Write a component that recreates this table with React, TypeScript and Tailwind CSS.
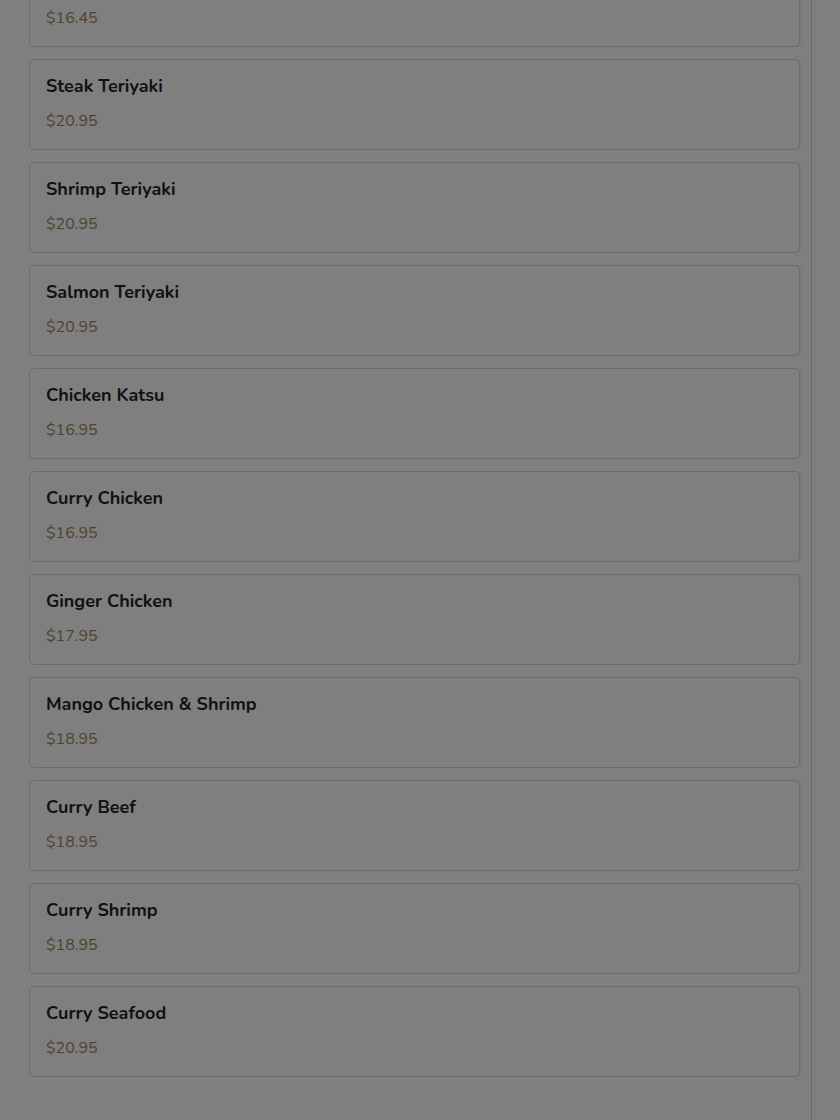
import React from "react";

const items = [
  { name: "Chicken Teriyaki", price: "$16.45" },
  { name: "Steak Teriyaki", price: "$20.95" },
  { name: "Shrimp Teriyaki", price: "$20.95" },
  { name: "Salmon Teriyaki", price: "$20.95" },
  { name: "Chicken Katsu", price: "$16.95" },
  { name: "Curry Chicken", price: "$16.95" },
  { name: "Ginger Chicken", price: "$17.95" },
  { name: "Mango Chicken & Shrimp", price: "$18.95" },
  { name: "Curry Beef", price: "$18.95" },
  { name: "Curry Shrimp", price: "$18.95" },
  { name: "Curry Seafood", price: "$20.95" },
];

export default function App() {
  return (
    <div
      className="relative h-[1120px] w-[840px] overflow-hidden bg-white"
      style={{ fontFamily: "Nunito, Lato, 'Noto Sans', sans-serif" }}
    >
      <div className="flex h-full">
        <div className="h-full w-[812px] border-r border-[#d4d4d4]">
          <div className="-mt-[44px] flex flex-col gap-[12px] pl-[29px] pr-[11px]">
            {items.map((it) => (
              <div
                key={it.name}
                className="flex h-[91px] flex-col rounded-[5px] border border-[#d6d6d6] bg-white px-[16px] pt-[14px] shadow-[2px_0_0_rgba(0,0,0,0.04)]"
              >
                <div className="text-[18px] font-bold leading-[24px] text-[#252525]">
                  {it.name}
                </div>
                <div className="mt-[11px] text-[16px] leading-[24px] text-[#9c8760]">
                  {it.price}
                </div>
              </div>
            ))}
          </div>
        </div>
        <div className="flex-1" />
      </div>
      <div className="absolute inset-0 bg-black/50" />
    </div>
  );
}
